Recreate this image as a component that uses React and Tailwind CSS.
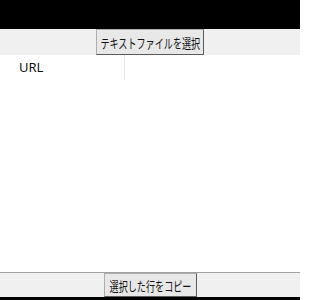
const jp = { fontFamily: '"Noto Sans CJK JP", "Noto Sans", sans-serif' };

const WinButton = ({ label, className }) => {
  return (
    <button
      className={`flex items-center justify-center overflow-hidden border border-[#adadad] border-b-[#5a5a5a] border-r-[#5a5a5a] bg-[#e8e8e8] text-[13px] leading-none text-[#111] ${className}`}
      style={jp}
    >
      <span className="inline-block origin-center scale-x-[0.7] whitespace-nowrap">
        {label}
      </span>
    </button>
  );
};

export default function App() {
  return (
    <div className="flex h-[300px] w-[300px] flex-col overflow-hidden bg-white">
      {/* title area */}
      <div className="h-[29px] w-full shrink-0 bg-black" />

      {/* top toolbar */}
      <div className="flex h-[26px] shrink-0 justify-center bg-[#f0f0f0]">
        <WinButton label="テキストファイルを選択" className="h-[26px] w-[108px]" />
      </div>

      {/* list */}
      <div className="flex flex-1 flex-col bg-white">
        <div className="flex h-[25px] text-[13px] text-[#111]" style={{ fontFamily: '"Noto Sans", sans-serif' }}>
          <div className="flex w-[125px] items-center border-r border-[#e5e5e5] pl-[19px]">URL</div>
          <div className="flex-1" />
        </div>
      </div>

      {/* bottom toolbar */}
      <div className="flex h-[25px] shrink-0 justify-center border-t border-[#a0a0a0] bg-[#f0f0f0]">
        <WinButton label="選択した行をコピー" className="h-[24px] w-[93px]" />
      </div>
      <div className="h-[3px] w-full shrink-0 bg-black" />
    </div>
  );
}
